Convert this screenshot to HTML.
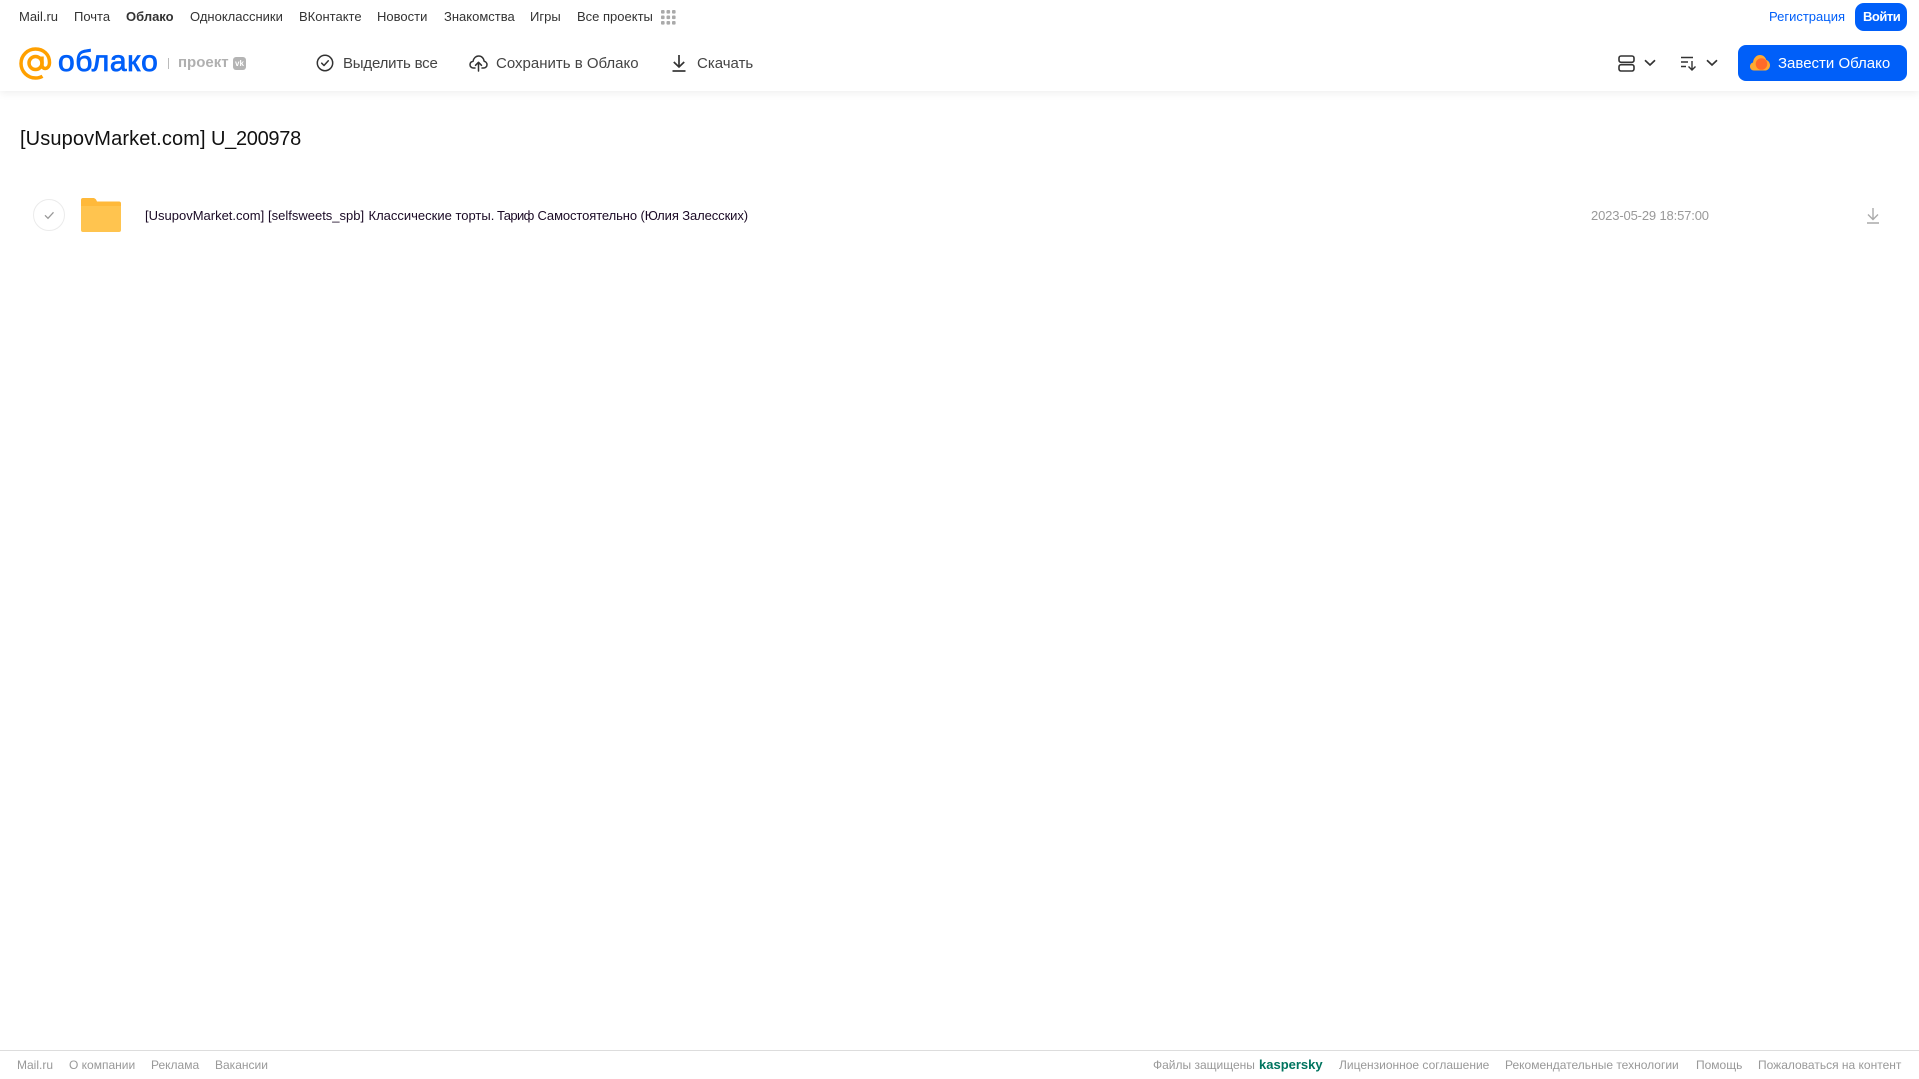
<!DOCTYPE html>
<html lang="ru"><head><meta charset="utf-8"><title>Облако</title>
<style>
html,body{margin:0;padding:0;background:#fff}
body{position:relative;width:1919px;height:1079px;overflow:hidden;font-family:"Liberation Sans","Noto Sans CJK SC",sans-serif;color:#333}
.t{position:absolute;white-space:nowrap;line-height:20px}
.n{top:7px;font-size:13px;color:#333}
.b{top:54px;font-size:15px;color:#444}
.f{top:1055px;font-size:12px;color:#999}
.r{top:206px;font-size:13px;color:#1a0a25}
svg{position:absolute;overflow:visible}
</style></head><body>
<div style="position:absolute;left:0;top:0;width:1919px;height:91px;background:#fff;box-shadow:0 2px 8px rgba(0,0,0,.07)"></div>
<span class="t n" style="left:19px">Mail.ru</span>
<span class="t n" style="left:74px">Почта</span>
<span class="t n" style="left:126px;font-weight:700">Облако</span>
<span class="t n" style="left:190px">Одноклассники</span>
<span class="t n" style="left:299px">ВКонтакте</span>
<span class="t n" style="left:377px">Новости</span>
<span class="t n" style="left:444px">Знакомства</span>
<span class="t n" style="left:530px">Игры</span>
<span class="t n" style="left:577px">Все проекты</span>
<svg style="left:661px;top:10px" width="15" height="15" fill="#aaa"><rect width="3.6" height="3.6" rx="1"/><rect x="5.5" width="3.6" height="3.6" rx="1"/><rect x="11" width="3.6" height="3.6" rx="1"/><rect y="5.5" width="3.6" height="3.6" rx="1"/><rect x="5.5" y="5.5" width="3.6" height="3.6" rx="1"/><rect x="11" y="5.5" width="3.6" height="3.6" rx="1"/><rect y="11" width="3.6" height="3.6" rx="1"/><rect x="5.5" y="11" width="3.6" height="3.6" rx="1"/><rect x="11" y="11" width="3.6" height="3.6" rx="1"/></svg>
<span class="t n" style="left:1769px;color:#005ff9">Регистрация</span>
<div style="position:absolute;left:1855px;top:3px;width:52px;height:28px;border-radius:9px;background:#005ff9"></div>
<span class="t n" style="left:1863px;color:#fff;font-weight:700;letter-spacing:-.5px">Войти</span>

<svg style="left:19px;top:47px" width="33" height="33" viewBox="0 0 33 33" fill="none" stroke="#ffa000" stroke-width="3.500"><circle cx="16.500" cy="16" r="6.500"/><path d="M23 9.500v8.500c0 5 7.500 5 7.500-2.500C30.500 7.500 24.500 2 16.500 2S2 8.500 2 16.500 8.500 31 16.500 31c2.800 0 5-.6 7-1.800"/></svg>
<span class="t" style="left:58px;top:44px;line-height:36px;font-size:30px;color:#005ff9;-webkit-text-stroke:.8px #005ff9;letter-spacing:.6px">облако</span>
<div style="position:absolute;left:168px;top:58px;width:1px;height:11px;background:#bbb"></div>
<span class="t" style="left:178px;top:53px;font-size:15px;font-weight:700;color:#b0b0b0">проект</span>
<div style="position:absolute;left:233px;top:57px;width:13px;height:13px;border-radius:3px;background:#b4b4b4;color:#fff;font-size:8px;font-weight:700;line-height:13px;text-align:center">vk</div>

<svg style="left:316px;top:54px" width="18" height="18" viewBox="0 0 18 18" fill="none" stroke="#333" stroke-width="1.500"><circle cx="9" cy="9" r="7.700"/><path d="M5.700 9.200l2.300 2.300 4.300-4.700" stroke-linecap="round" stroke-linejoin="round"/></svg>
<span class="t b" style="left:343px;letter-spacing:-.2px">Выделить все</span>
<svg style="left:469px;top:54px" width="19" height="18" viewBox="0 0 19 18" fill="none" stroke="#333" stroke-width="1.500" stroke-linecap="round" stroke-linejoin="round"><path d="M6 14H4.500C2.500 14 1 12.500 1 10.700 1 9 2.200 7.700 4 7.400 4.500 4.200 6.800 2 9.700 2c2.800 0 5 2 5.400 5.200C16.800 7.500 18 9 18 10.700 18 12.500 16.500 14 14.500 14H13"/><path d="M9.500 17V8.500M6.500 11.300l3-3 3 3"/></svg>
<span class="t b" style="left:496px">Сохранить в Облако</span>
<svg style="left:671px;top:54px" width="16" height="18" viewBox="0 0 16 18" fill="none" stroke="#333" stroke-width="1.700"><path d="M8 1v11.500M2.800 8l5.200 5 5.200-5"/><path d="M1.500 17h13"/></svg>
<span class="t b" style="left:697px">Скачать</span>

<svg style="left:1618px;top:55px" width="17" height="17" viewBox="0 0 17 17" fill="none" stroke="#333" stroke-width="1.600"><rect x="1" y="1" width="15" height="6.300" rx="2"/><rect x="1" y="9.700" width="15" height="6.300" rx="2"/></svg>
<svg style="left:1644px;top:59px" width="12" height="8" viewBox="0 0 12 8" fill="none" stroke="#333" stroke-width="1.700"><path d="M1 1.300l5 4.700 5-4.700"/></svg>
<svg style="left:1681px;top:56px" width="16" height="15" viewBox="0 0 16 15" fill="none" stroke="#333" stroke-width="1.400"><path d="M0 1.500h12M0 6h7M0 10.500h5M11 5v9M7.500 10.500l3.500 3.500 3.500-3.500"/></svg>
<svg style="left:1706px;top:59px" width="12" height="8" viewBox="0 0 12 8" fill="none" stroke="#333" stroke-width="1.700"><path d="M1 1.300l5 4.700 5-4.700"/></svg>
<div style="position:absolute;left:1738px;top:45px;width:169px;height:36px;border-radius:8px;background:#005ff9"></div>
<svg style="left:1750px;top:54px" width="20" height="17" viewBox="0 0 20 17"><path d="M4 16.500C1.800 16.500 0 14.800 0 12.500c0-2 1.300-3.600 3-4C3.500 4 6.500 1 10 1c3 0 5.500 2 6.300 5 2 .6 3.700 2.800 3.700 5.200 0 3-2.300 5.300-5 5.300z" fill="#ffa930"/><circle cx="11.500" cy="10" r="5.800" fill="#ff6a2a"/></svg>
<span class="t" style="left:1778px;top:54px;font-size:15px;color:#fff">Завести Облако</span>

<span class="t" style="left:20px;top:127px;line-height:24px;font-size:20px;color:#111;letter-spacing:.13px">[UsupovMarket.com]</span>
<span class="t" style="left:211px;top:127px;line-height:24px;font-size:20px;color:#111;letter-spacing:-.3px">U_200978</span>

<svg style="left:33px;top:199px" width="32" height="32" viewBox="0 0 32 32" fill="none"><circle cx="16" cy="16" r="15.500" stroke="#ebebeb"/><path d="M12 16.300l3 3 5.500-6" stroke="#999" stroke-width="1.300"/></svg>
<svg style="left:81px;top:198px" width="40" height="34" viewBox="0 0 40 34"><path d="M0 2a2 2 0 0 1 2-2h10c2 0 3 1 4 3.500h22a2 2 0 0 1 2 2V10H0z" fill="#ffb93a"/><path d="M0 8h40v24a2 2 0 0 1-2 2H2a2 2 0 0 1-2-2z" fill="#ffc44f"/></svg>
<span class="t r" style="left:145px">[UsupovMarket.com]</span>
<span class="t r" style="left:268px">[selfsweets_spb]</span>
<span class="t r" style="left:368.500px">Классические торты.</span>
<span class="t r" style="left:497px;letter-spacing:-.6px">Тариф</span>
<span class="t r" style="left:537.500px;letter-spacing:-.1px">Самостоятельно (Юлия Залесских)</span>
<span class="t" style="left:1591px;top:206px;font-size:13px;color:#999;letter-spacing:-.15px">2023-05-29 18:57:00</span>
<svg style="left:1866px;top:207px" width="14" height="17" viewBox="0 0 14 17" fill="none" stroke="#aaa" stroke-width="1.400"><path d="M7 1v11M2 7.500l5 5 5-5M1 16h12"/></svg>

<div style="position:absolute;left:0;top:1050px;width:1919px;height:1px;background:#ddd"></div>
<span class="t f" style="left:17px">Mail.ru</span>
<span class="t f" style="left:69px">О компании</span>
<span class="t f" style="left:151px">Реклама</span>
<span class="t f" style="left:215px">Вакансии</span>
<span class="t f" style="left:1153px">Файлы защищены</span>
<span class="t" style="left:1259px;top:1055px;font-size:13px;font-weight:700;color:#00745f">kaspersky</span>
<span class="t f" style="left:1339px">Лицензионное соглашение</span>
<span class="t f" style="left:1505px">Рекомендательные технологии</span>
<span class="t f" style="left:1696px">Помощь</span>
<span class="t f" style="left:1758px">Пожаловаться на контент</span>
</body></html>
